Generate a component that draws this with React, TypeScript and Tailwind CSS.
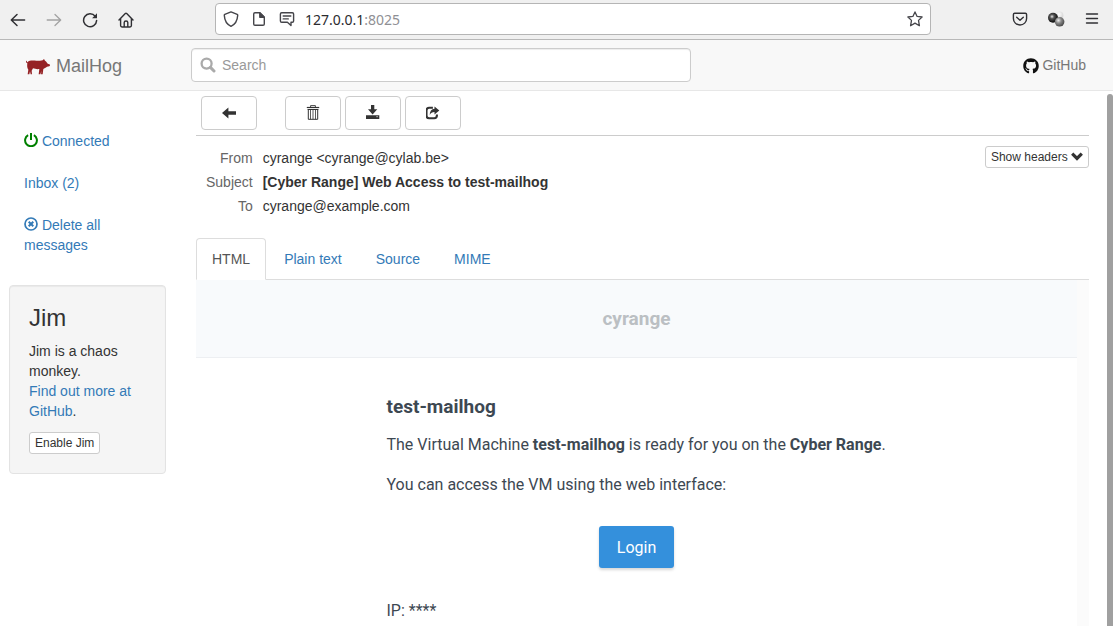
import React from "react";
import { FaGithub } from "react-icons/fa";

const outline = {
  fill: "none",
  stroke: "currentColor",
  strokeLinecap: "round" as const,
  strokeLinejoin: "round" as const,
};

function BackIcon() {
  return (
    <svg className="size-4" viewBox="0 0 16 16" strokeWidth="1.5" {...outline}>
      <path d="M14.6 8H1.5M7 2.5L1.3 8L7 13.5" />
    </svg>
  );
}

function ForwardIcon() {
  return (
    <svg className="size-4" viewBox="0 0 16 16" strokeWidth="1.3" {...outline}>
      <path d="M1.2 8h13.3M9 2.5L14.7 8L9 13.5" />
    </svg>
  );
}

function ReloadIcon() {
  return (
    <svg className="size-4" viewBox="0 0 16 16" strokeWidth="1.5" {...outline}>
      <path d="M13.2 4.2A6.5 6.5 0 1 0 14.6 8.6" />
      <path d="M15 1.3V6.2H10.1Z" fill="currentColor" stroke="none" />
    </svg>
  );
}

function HomeIcon() {
  return (
    <svg className="size-4" viewBox="0 0 16 16" strokeWidth="1.4" {...outline}>
      <path d="M1 8L7.3 1.5Q8 .9 8.7 1.5L15 8M2.6 6.8V13.6Q2.6 15 4 15H12Q13.4 15 13.4 13.6V6.8M6.2 15V10.6Q6.2 9 8 9Q9.8 9 9.8 10.6V15" />
    </svg>
  );
}

function ShieldIcon() {
  return (
    <svg className="size-4" viewBox="0 0 16 16" strokeWidth="1.4" {...outline}>
      <path d="M8 .9L14.2 3.3Q14.8 3.6 14.7 4.4C14.4 9.5 12.4 13.3 8 15.3C3.6 13.3 1.6 9.5 1.3 4.4Q1.2 3.6 1.8 3.3Z" />
    </svg>
  );
}

function PageIcon() {
  return (
    <svg className="size-4" viewBox="0 0 16 16" strokeWidth="1.4" {...outline}>
      <path d="M8.8 1.7H4Q2.7 1.7 2.7 3V13Q2.7 14.3 4 14.3H12Q13.3 14.3 13.3 13V6.2Z" />
      <path d="M8.8 1.7V6.2H13.3Z" fill="currentColor" />
    </svg>
  );
}

function PermissionIcon() {
  return (
    <svg className="size-4" viewBox="0 0 16 16" strokeWidth="1.4" {...outline}>
      <path d="M2.7 1.7H13.3Q14.6 1.7 14.6 3V10Q14.6 11.3 13.3 11.3H12V14.6L8.4 11.3H2.7Q1.4 11.3 1.4 10V3Q1.4 1.7 2.7 1.7ZM4.2 5H11.8M4.2 7.9H9.3" />
    </svg>
  );
}

function StarIcon() {
  return (
    <svg className="size-4" viewBox="0 0 16 16" strokeWidth="1.3" {...outline}>
      <path d="M8 .9L10.1 5.4L15.1 6L11.5 9.4L12.4 14.7L8 12.1L3.6 14.7L4.5 9.4L.9 6L5.9 5.4Z" />
    </svg>
  );
}

function PocketIcon() {
  return (
    <svg className="size-4" viewBox="0 0 16 16" strokeWidth="1.4" {...outline}>
      <path d="M2.7 2.2H13.3Q14.6 2.2 14.6 3.5V7.4C14.6 11.2 11.7 14 8 14S1.4 11.2 1.4 7.4V3.5Q1.4 2.2 2.7 2.2ZM4.7 6.2L8 9.3L11.3 6.2" />
    </svg>
  );
}

function SpheresIcon() {
  return (
    <svg className="h-4 w-[18px]" viewBox="0 0 18 16">
      <defs>
        <radialGradient id="sphere-dark" cx=".4" cy=".38" r=".6">
          <stop offset="0" stopColor="#e8e8e8" />
          <stop offset=".35" stopColor="#555" />
          <stop offset="1" stopColor="#080808" />
        </radialGradient>
        <radialGradient id="sphere-gray" cx=".38" cy=".35" r=".65">
          <stop offset="0" stopColor="#eee" />
          <stop offset=".45" stopColor="#8a8a8a" />
          <stop offset="1" stopColor="#4a4a4a" />
        </radialGradient>
        <radialGradient id="sphere-light" cx=".4" cy=".35" r=".65">
          <stop offset="0" stopColor="#fff" />
          <stop offset="1" stopColor="#d4d4d4" />
        </radialGradient>
      </defs>
      <circle cx="12.6" cy="4.4" r="3.8" fill="url(#sphere-light)" />
      <circle cx="6" cy="6.8" r="5" fill="url(#sphere-dark)" />
      <circle cx="12.6" cy="10.8" r="4.8" fill="url(#sphere-gray)" />
    </svg>
  );
}

function MenuIcon() {
  return (
    <svg className="size-4" viewBox="0 0 16 16" strokeWidth="1.4" {...outline}>
      <path d="M2.5 3H13.5M2.5 7.5H13.5M2.5 12H13.5" />
    </svg>
  );
}

function HogLogo() {
  return (
    <svg className="h-[18px] w-6" viewBox="0 -6 72 54" fill="#952225">
      <path d="M0 6Q3 4 3 8Q3 11 5 9C9 4 19 4 31 5C40 5 45 6 50 4L54 0L57 5C62 7 63 13 67 15L71 16L72 20L70 22L63 23C59 26 55 27 52 30L50 46H45L46 36L43 46H38L40 30C34 31 27 30 21 28L17 35L18 46H14L12 37L10 46H5L7 32C3 28 3 20 4 13Q0 13 0 6Z" />
    </svg>
  );
}

function SearchIcon() {
  return (
    <svg className="size-4" viewBox="0 0 16 16" fill="none" stroke="#aaa">
      <circle cx="6.6" cy="6.6" r="5" strokeWidth="2.3" />
      <path d="M10.4 10.4L14 14" strokeWidth="3" strokeLinecap="round" />
    </svg>
  );
}

function PowerIcon() {
  return (
    <svg className="inline-block size-[14px] align-[-1px] text-[#008000]" viewBox="0 0 14 14" strokeWidth="2" fill="none" stroke="currentColor">
      <path d="M4.1 2.2A5.9 5.9 0 1 0 9.9 2.2M7 0V7" />
    </svg>
  );
}

function RemoveCircleIcon() {
  return (
    <svg className="inline-block size-[14px] align-[-1px]" viewBox="0 0 14 14" fill="none" stroke="currentColor">
      <circle cx="7" cy="7" r="6" strokeWidth="1.7" />
      <path d="M4.7 4.7L9.3 9.3M9.3 4.7L4.7 9.3" strokeWidth="2" />
    </svg>
  );
}

function ArrowLeftGlyph() {
  return (
    <svg className="h-4 w-[14px]" viewBox="0 0 14 16" fill="currentColor">
      <path d="M0 8L6.4 2.4V6.2H14V9.8H6.4V13.6Z" />
    </svg>
  );
}

function TrashGlyph() {
  return (
    <svg className="h-4 w-[14px]" viewBox="0 0 14 16" fill="none" stroke="currentColor">
      <path d="M.8 2.5H13.2" strokeWidth="1.2" />
      <path d="M4.6 2.3V.6H9.4V2.3" strokeWidth=".9" />
      <path d="M2.3 4.4V14.3H11.7V4.4M1.6 4.5H12.4" />
      <path d="M4.5 4.5V14.3M7 4.5V14.3M9.5 4.5V14.3" strokeWidth=".8" />
    </svg>
  );
}

function DownloadGlyph() {
  return (
    <svg className="h-4 w-[14px]" viewBox="0.7 1 14 16" fill="currentColor">
      <path d="M5.7 1H9V5.3H12L7.3 10.4L2.7 5.3H5.7ZM.7 11.2H14V14.9H.7Z" />
      <path d="M11 12.7h1.6" stroke="#fff" strokeWidth=".7" />
    </svg>
  );
}

function ShareGlyph() {
  return (
    <svg className="h-4 w-[14px]" viewBox="0.7 0.4 14 16" fill="currentColor">
      <path d="M7.6 3.2H3.8Q1.2 3.2 1.2 5.8V11Q1.2 13.6 3.8 13.6H9Q11.6 13.6 11.6 11V10" fill="none" stroke="currentColor" strokeWidth="2.1" />
      <path d="M9.2 1.8L14 5.8L9.2 9.8V7.5C6.9 7.5 5.6 8.4 4.4 10.3C4.5 6.8 6.2 4.5 9.2 4.2Z" />
    </svg>
  );
}

function ChevronGlyph() {
  return (
    <svg className="inline-block h-[10px] w-3 align-[-1px]" viewBox="0 0 12 10" fill="none" stroke="currentColor" strokeWidth="3.2">
      <path d="M1.2 1.6L6 6.4L10.8 1.6" />
    </svg>
  );
}

function BrowserBar() {
  return (
    <header className="flex h-10 shrink-0 items-start border-b border-[#b8b8b8] bg-[#f0f0f0] pt-[3px] text-[#303034]">
      <nav aria-label="Browser" className="flex h-8 w-[215px] shrink-0 items-center gap-5 pt-[2px] pl-[10px]">
        <button aria-label="Back"><BackIcon /></button>
        <button aria-label="Forward" className="text-[#a3a3a3]"><ForwardIcon /></button>
        <button aria-label="Reload"><ReloadIcon /></button>
        <button aria-label="Home"><HomeIcon /></button>
      </nav>
      <div className="flex h-8 min-w-0 flex-1 items-center gap-3 rounded border border-[#b5b5b5] bg-white px-[7px] text-[#45454a]">
        <ShieldIcon />
        <PageIcon />
        <div className="flex min-w-0 flex-1 items-center gap-[10px]">
          <PermissionIcon />
          <p className="pt-[2px] font-['Noto_Sans',sans-serif] text-sm leading-5 text-[#8f8f94]">
            <span className="text-[#2b2b2f]">127.0.0.1</span>:8025
          </p>
        </div>
        <button aria-label="Bookmark this page"><StarIcon /></button>
      </div>
      <div className="flex h-8 w-[182px] shrink-0 items-center justify-end gap-[19px] pr-[13px]">
        <button aria-label="Save to Pocket"><PocketIcon /></button>
        <button aria-label="Extension"><SpheresIcon /></button>
        <button aria-label="Menu"><MenuIcon /></button>
      </div>
    </header>
  );
}

function AppBar() {
  return (
    <div className="flex h-[51px] shrink-0 items-center border-b border-[#e7e7e7] bg-[#f8f8f8] text-[#777]">
      <a href="#home" className="flex w-[191px] shrink-0 items-center gap-[6px] pt-[2px] pl-[26px] text-lg leading-5">
        <HogLogo />
        MailHog
      </a>
      <label className="flex h-[34px] w-[500px] items-center gap-[6px] rounded border border-[#ccc] bg-white px-2 shadow-[inset_0_1px_1px_rgba(0,0,0,0.075)]">
        <SearchIcon />
        <input
          type="search"
          aria-label="Search"
          placeholder="Search"
          className="min-w-0 flex-1 bg-transparent leading-5 text-[#555] outline-none placeholder:text-[#999]"
        />
      </label>
      <a href="#github" className="ml-auto flex items-center gap-[3px] pr-[27px]">
        <FaGithub className="mt-[2px] size-4 text-[#111]" />
        GitHub
      </a>
    </div>
  );
}

function Sidebar() {
  const link = "block px-[15px] py-[10px]";
  return (
    <aside className="w-[166px] shrink-0 pt-[30px] pl-[9px]">
      <nav aria-label="Mailbox" className="flex flex-col gap-[2px] text-[#337ab7]">
        <a href="#status" className={link}><PowerIcon /> Connected</a>
        <a href="#inbox" className={link}>Inbox (2)</a>
        <a href="#delete" className={link}><RemoveCircleIcon /> Delete all messages</a>
      </nav>
      <section className="mt-5 rounded border border-[#e3e3e3] bg-[#f5f5f5] p-[19px] shadow-[inset_0_1px_1px_rgba(0,0,0,0.05)]">
        <h3 className="mb-[10px] text-2xl leading-[26px]">Jim</h3>
        <p>
          Jim is a chaos monkey.
          <br />
          <a href="#jim" className="text-[#337ab7]">Find out more at GitHub</a>.
        </p>
        <button className="mt-[11px] block rounded-[3px] border border-[#ccc] bg-white px-[5px] py-px text-xs leading-[18px]">
          Enable Jim
        </button>
      </section>
    </aside>
  );
}

function ToolButton({ label, children }: { label: string; children: React.ReactNode }) {
  return (
    <button aria-label={label} className="flex h-[34px] w-14 items-center justify-center rounded border border-[#ccc] bg-white">
      {children}
    </button>
  );
}

const tabs = ["HTML", "Plain text", "Source", "MIME"];

function Message() {
  const labelCell = "pr-[10px] pl-[10px] text-right font-normal text-[#666]";
  return (
    <main className="flex min-w-0 flex-1 flex-col pr-[18px] pl-[30px]">
      <div role="toolbar" className="flex shrink-0 gap-1 border-b border-[#ccc] p-[5px]">
        <ToolButton label="Back to inbox"><ArrowLeftGlyph /></ToolButton>
        <span className="w-5" />
        <ToolButton label="Delete"><TrashGlyph /></ToolButton>
        <ToolButton label="Download"><DownloadGlyph /></ToolButton>
        <ToolButton label="Release"><ShareGlyph /></ToolButton>
      </div>

      <div className="flex shrink-0 items-start justify-between pt-[10px]">
        <table className="leading-6">
          <tbody>
            <tr>
              <th scope="row" className={labelCell}>From</th>
              <td>cyrange &lt;cyrange@cylab.be&gt;</td>
            </tr>
            <tr>
              <th scope="row" className={labelCell}>Subject</th>
              <td className="font-bold">[Cyber Range] Web Access to test-mailhog</td>
            </tr>
            <tr>
              <th scope="row" className={labelCell}>To</th>
              <td>cyrange@example.com</td>
            </tr>
          </tbody>
        </table>
        <button className="rounded-[3px] border border-[#ccc] bg-white px-[5px] py-px text-xs leading-[18px]">
          Show headers <ChevronGlyph />
        </button>
      </div>

      <div role="tablist" className="mt-5 flex shrink-0 gap-[2px] border-b border-[#ddd] text-[#337ab7]">
        {tabs.map((name, i) => (
          <button
            key={name}
            role="tab"
            aria-selected={i === 0}
            className={
              i === 0
                ? "-mb-px rounded-t border border-[#ddd] border-b-white bg-white px-[15px] py-[10px] text-[#555]"
                : "-mb-px border border-transparent px-[15px] py-[10px]"
            }
          >
            {name}
          </button>
        ))}
      </div>

      <div className="min-h-0 flex-1 bg-[#fbfbfb] pr-3">
        <article className="min-h-full bg-white font-[Roboto,sans-serif] text-base leading-6 text-[#3d4852]">
          <div className="border-b border-[#edeff2] bg-[#f8fafc] py-[25px] text-center text-[19px] leading-[27px] font-bold text-[#bbbfc3]">
            cyrange
          </div>
          <div className="mx-auto max-w-[500px] pt-[35px]">
            <h1 className="text-[19px] leading-7 font-bold">test-mailhog</h1>
            <p className="mt-3">
              The Virtual Machine <strong>test-mailhog</strong> is ready for you on the <strong>Cyber Range</strong>.
            </p>
            <p className="mt-4">You can access the VM using the web interface:</p>
            <div className="my-[30px] flex justify-center">
              <a
                href="#login"
                className="-mt-px mb-px rounded-[3px] bg-[#3490dc] px-[18px] pt-[10px] pb-2 text-white shadow-[0_2px_3px_rgba(0,0,0,0.16)]"
              >
                Login
              </a>
            </div>
            <p>IP: ****</p>
          </div>
        </article>
      </div>
    </main>
  );
}

export default function App() {
  return (
    <div className="flex h-screen flex-col overflow-hidden bg-white font-['Liberation_Sans',Arial,sans-serif] text-sm leading-5 text-[#333]">
      <BrowserBar />
      <AppBar />
      <div className="flex min-h-0 flex-1">
        <Sidebar />
        <Message />
        <div className="mt-[3px] w-[6px] shrink-0 rounded-t-[3px] bg-[#a0a0a0]" />
      </div>
    </div>
  );
}
